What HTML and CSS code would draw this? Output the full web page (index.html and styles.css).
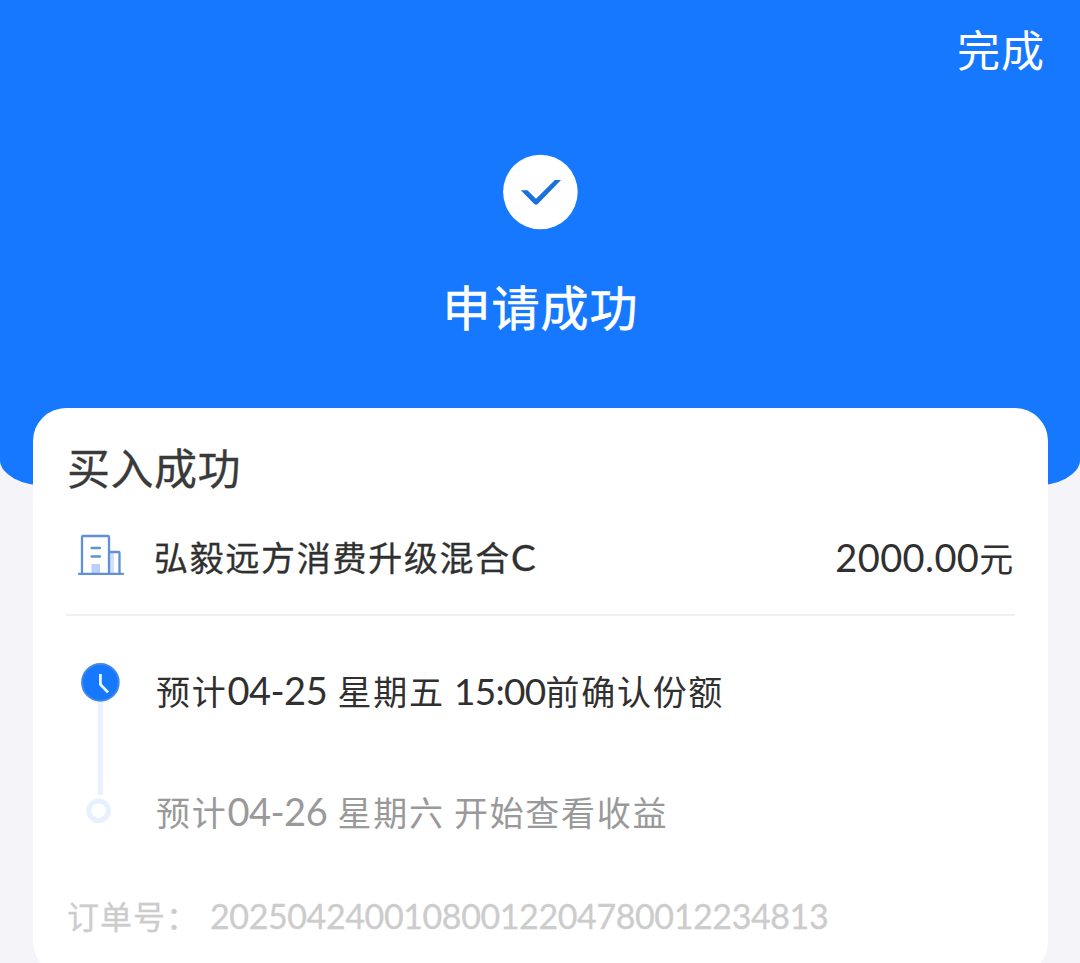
FILE: index.html
```html
<!DOCTYPE html>
<html lang="zh-CN">
<head>
    <meta charset="UTF-8">
    <meta name="viewport" content="width=device-width, initial-scale=1.0">
    <title>申请成功</title>
    <link rel="stylesheet" href="styles.css">
</head>
<body>
    <!-- Blue header with the status -->
    <header class="header">
        <a class="done">完成</a>
        <svg class="check" viewBox="0 0 76 76">
            <circle cx="38.4" cy="38" r="37.3" fill="#fff"/>
            <path d="M18.8 36.3H25.4L34 44.8L52.9 26H59L36 49.8Q34 51.8 32 49.8Z" fill="#1b70dc"/>
        </svg>
        <h1 class="status">申请成功</h1>
    </header>

    <!-- Order card -->
    <main class="card">
        <h2 class="card-title">买入成功</h2>
        <div class="fund">
            <svg class="fund-icon" viewBox="0 0 46 42">
                <rect x="13.5" y="30" width="8.5" height="9" fill="#bccffa"/>
                <rect x="32" y="18" width="4" height="21" fill="#d3e0fb"/>
                <path d="M4 39V3Q4 2 5 2H30Q31 2 31 3V39M31 18H40.5Q41.5 18 41.5 19V39M1 39.8H45M13.5 14H22M13.5 22.5H22" fill="none" stroke="#5f90d8" stroke-width="2.3" stroke-linecap="round"/>
            </svg>
            <span class="fund-name">弘毅远方消费升级混合<span class="num">C</span></span>
            <span class="amount"><span class="num">2000.00</span>元</span>
        </div>

        <div class="progress">
            <svg class="line" viewBox="0 0 40 162">
                <path d="M20.4 40V133" stroke="#e9f1fd" stroke-width="5.6"/>
                <circle cx="20.4" cy="20.4" r="18.3" fill="#1677ff" stroke="#4388e8" stroke-width="2"/>
                <path d="M20.4 12V22.4L28 30.4" fill="none" stroke="#e8fbff" stroke-width="2.8"/>
                <circle cx="18.7" cy="148.7" r="9.8" fill="#fff" stroke="#e6f1fd" stroke-width="5"/>
            </svg>
            <div class="steps">
                <p class="step">预计<span class="num date">04-25</span> <span class="day">星期五</span> <span class="num time">15:00</span>前确认份额</p>
                <p class="step next">预计<span class="num date">04-26</span> <span class="day">星期六</span> 开始查看收益</p>
            </div>
        </div>

        <div class="order">
            <span class="order-label">订单号：</span>
            <span class="order-no">20250424001080012204780012234813</span>
        </div>
    </main>
</body>
</html>
```
FILE: styles.css
```css
/* Basic reset */
body, h1, h2, p {
    margin: 0;
    padding: 0;
    font-weight: normal;
}

body {
    height: 963px;
    overflow: hidden;
    background-color: #f4f4f9;
    font-family: "Noto Sans CJK SC", sans-serif;
    color: #303030;
}

/* Header */
.header {
    box-sizing: border-box;
    height: 486px;
    padding-top: 18px;
    background-color: #1677ff;
    border-radius: 0 0 48px 48px / 0 0 26px 26px;
    color: #fff;
    display: flex;
    flex-direction: column;
    align-items: center;
}

.done {
    align-self: flex-end;
    margin-right: 35px;
    font-size: 43px;
    line-height: 60px;
    letter-spacing: 1px;
}

.check {
    width: 76px;
    height: 76px;
    margin-top: 76px;
}

.status {
    margin: 40px 0 0 1px;
    font-size: 48px;
    line-height: 70px;
    letter-spacing: 1px;
    -webkit-text-stroke: 0.6px #fff;
}

/* White card over the header */
.card {
    position: relative;
    box-sizing: border-box;
    height: 567px;
    margin: -78px 32px 0 33px;
    padding: 28px 33px 0;
    background-color: #fff;
    border-radius: 33px;
}

.card-title {
    padding-left: 1px;
    font-size: 43px;
    line-height: 60px;
    letter-spacing: 0.5px;
    color: #3a3a3a;
    -webkit-text-stroke: 0.3px #3a3a3a;
}

/* Latin letters and digits */
.num {
    font-family: Lato, sans-serif;
    font-size: 38px;
    letter-spacing: 0.4px;
}

/* Fund row */
.fund {
    box-sizing: border-box;
    display: flex;
    align-items: center;
    height: 120px;
    padding-top: 4px;
    border-bottom: 2px solid #f1f1f3;
}

.fund-icon {
    width: 46px;
    height: 42px;
    margin: 0 30px 4px 12px;
}

.fund-name,
.amount {
    font-size: 34px;
    line-height: 50px;
    letter-spacing: 1.7px;
}

.fund-name {
    flex: 1;
    -webkit-text-stroke: 0.3px #303030;
}

.fund-name .num {
    font-size: 37px;
}

/* Timeline */
.progress {
    display: flex;
    padding: 46px 0 0 14px;
}

.line {
    width: 40px;
    height: 162px;
}

.steps {
    margin: -2px 0 0 36px;
}

.step {
    height: 121px;
    font-size: 34px;
    line-height: 60px;
    letter-spacing: 1.7px;
    white-space: nowrap;
}

.date {
    letter-spacing: -0.5px;
}

.day {
    margin-left: 1px;
}

.time {
    font-size: 37px;
    letter-spacing: -0.7px;
}

.next {
    color: #999;
}

/* Order number */
.order {
    display: flex;
    align-items: center;
    height: 50px;
    margin-top: -12px;
    color: #ccc;
    -webkit-text-stroke: 0.3px #ccc;
}

.order-label {
    width: 143px;
    padding-left: 1px;
    font-size: 32px;
    line-height: 46px;
    letter-spacing: 1px;
    white-space: nowrap;
}

.order-no {
    font-family: Lato, sans-serif;
    font-size: 34px;
    letter-spacing: -0.4px;
}
```
